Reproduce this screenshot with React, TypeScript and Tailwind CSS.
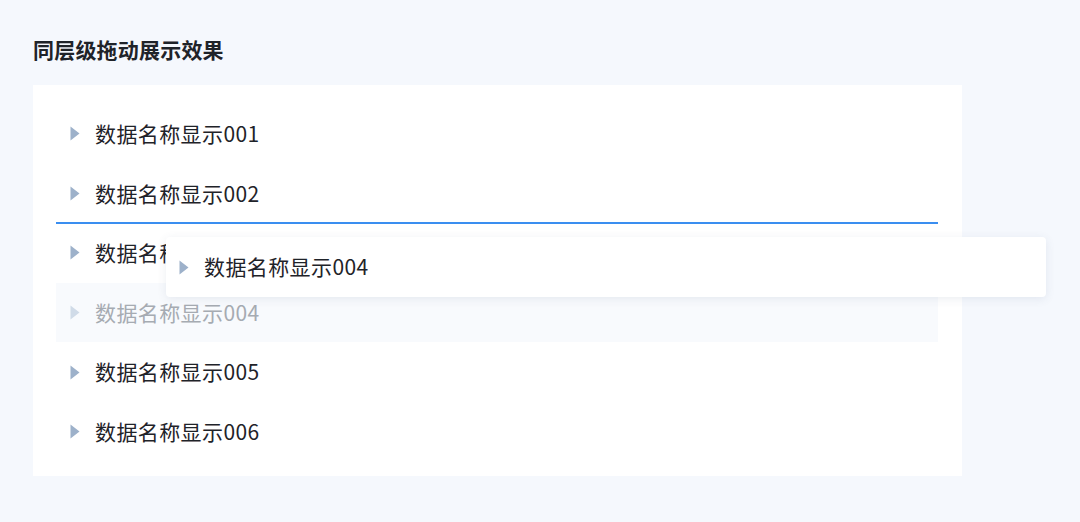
const rows = ['001', '002', '003', '004', '005', '006']

function Caret({ faded = false }: { faded?: boolean }) {
  return (
    <svg width="10" height="15" viewBox="0 0 10 15" className="shrink-0">
      <path d="M0.5 0.5 L9.5 7.5 L0.5 14.5 Z" fill={faded ? '#d0dbe8' : '#9db1ca'} />
    </svg>
  )
}

export default function App() {
  return (
    <div
      className="relative h-[522px] w-[1080px] bg-[#f5f8fd] pl-[33px] pt-[36px] text-[#1f2329]"
      style={{ fontFamily: '"Noto Sans CJK SC", "Noto Sans", sans-serif' }}
    >
      <h1 className="text-[21px] font-semibold leading-[27px] tracking-[0.2px]">同层级拖动展示效果</h1>
      <div className="mt-[22px] w-[929px] bg-white pb-[14px] pl-[23px] pr-[24px] pt-[19px]">
        {rows.map((n) => {
          const ghost = n === '004'
          return (
            <div key={n}>
              <div
                className={`flex h-[59.6px] items-center gap-[15px] pl-[14px] text-[21px] tracking-[0.4px] ${
                  ghost ? 'bg-[#f8fafd] text-[#a6abb2]' : ''
                }`}
              >
                <Caret faded={ghost} />
                <span>数据名称显示{n}</span>
              </div>
              {n === '002' && <div className="-my-[1px] h-[2px] bg-[#3a8ef0]" />}
            </div>
          )
        })}
      </div>
      <div className="absolute left-[166px] top-[237px] flex h-[60px] w-[880px] items-center gap-[15px] rounded-[4px] bg-white pl-[13px] text-[21px] tracking-[0.4px] shadow-[0_2px_10px_rgba(60,80,120,0.10)]">
        <Caret />
        <span>数据名称显示004</span>
      </div>
    </div>
  )
}
